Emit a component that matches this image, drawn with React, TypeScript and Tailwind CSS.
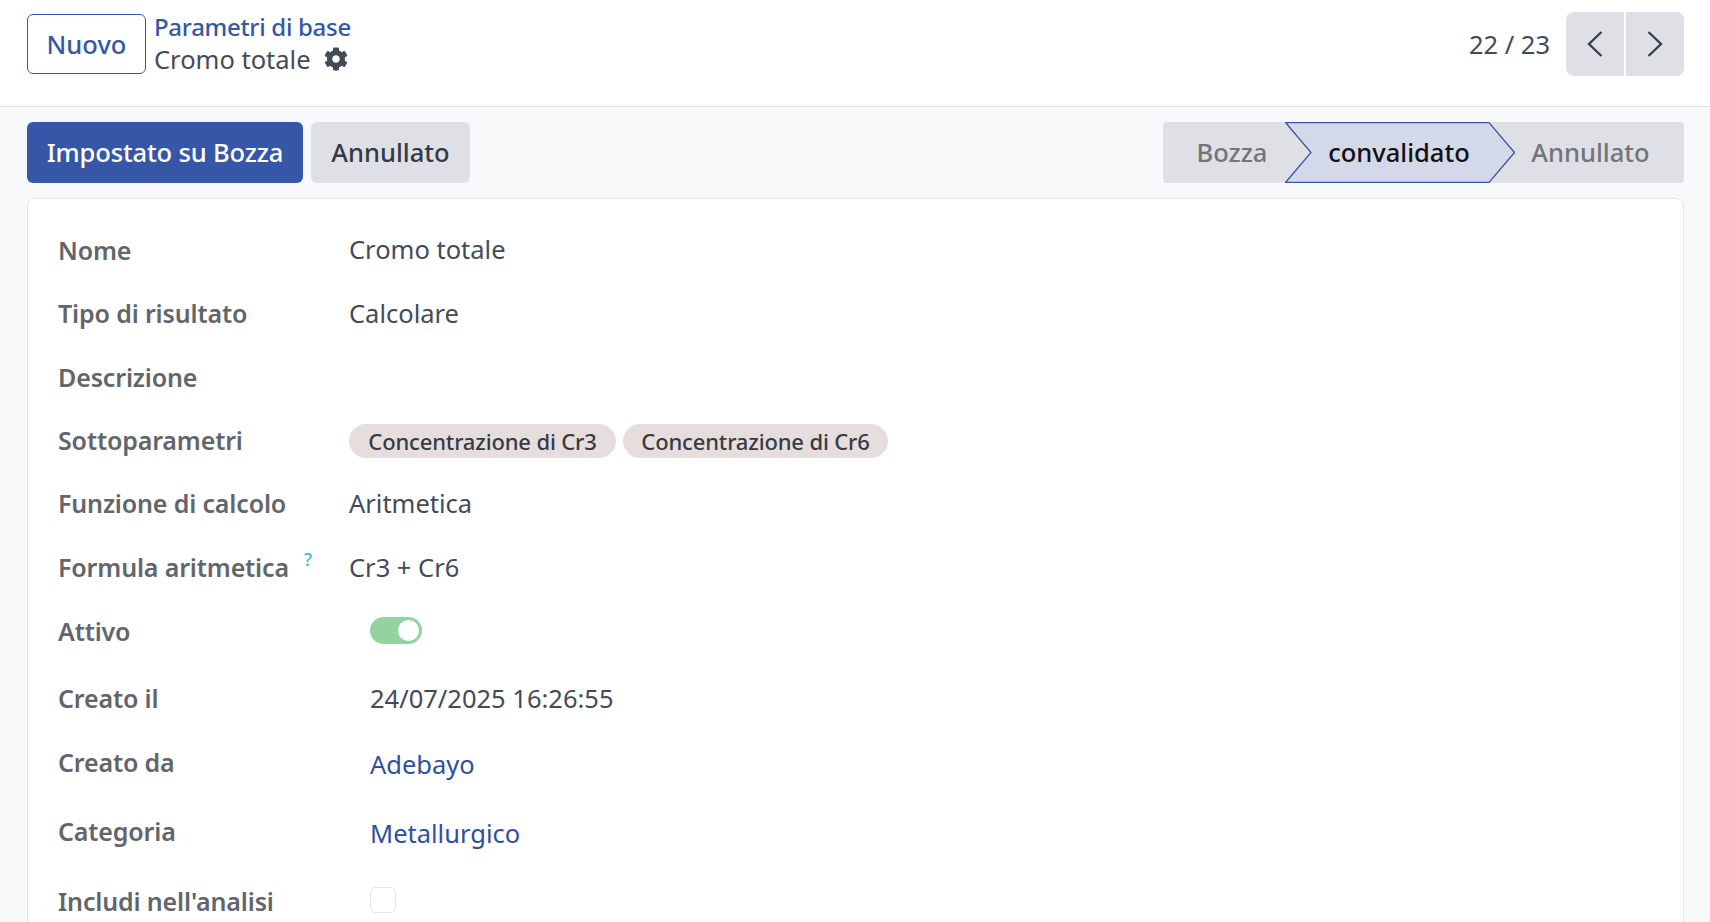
import React from "react";
import { FaCog } from "react-icons/fa";

const tag = "flex h-[34px] items-center justify-center rounded-full bg-[#e6dedc] text-[22px] font-medium tracking-[-0.15px] text-[#363b45]";

const rows: { label: string; h: string; help?: boolean; value: React.ReactNode }[] = [
  { label: "Nome", h: "h-[63px]", value: <span className="-mt-[2px]">Cromo totale</span> },
  { label: "Tipo di risultato", h: "h-[64px]", value: <span>Calcolare</span> },
  { label: "Descrizione", h: "h-[63px]", value: null },
  {
    label: "Sottoparametri",
    h: "h-[63px]",
    value: (
      <div className="flex items-center gap-[7px] pt-[2px]">
        <span className={`${tag} w-[267px]`}>Concentrazione di Cr3</span>
        <span className={`${tag} w-[265px]`}>Concentrazione di Cr6</span>
      </div>
    ),
  },
  { label: "Funzione di calcolo", h: "h-[64px]", value: <span>Aritmetica</span> },
  { label: "Formula aritmetica", h: "h-[64px]", help: true, value: <span>Cr3 + Cr6</span> },
  {
    label: "Attivo",
    h: "h-[67px]",
    value: (
      <div className="mb-[2px] ml-[21px] flex h-[27px] w-[52px] items-center justify-end rounded-full bg-[#92d3a0] pr-[3px]">
        <div className="h-[21px] w-[21px] rounded-full bg-white" />
      </div>
    ),
  },
  { label: "Creato il", h: "h-[64px]", value: <span className="pl-[21px]">24/07/2025 16:26:55</span> },
  {
    label: "Creato da",
    h: "h-[69px]",
    value: <span className="block pl-[21px] pt-[4px] text-[#2f4f9f]">Adebayo</span>,
  },
  {
    label: "Categoria",
    h: "h-[70px]",
    value: <span className="block pl-[21px] pt-[4px] text-[#2f4f9f]">Metallurgico</span>,
  },
  {
    label: "Includi nell'analisi",
    h: "h-[63px]",
    value: <div className="mb-[2px] ml-[21px] h-[26px] w-[26px] rounded-[5px] border border-[#e5e7eb] bg-white" />,
  },
];

function Chevron({ dir }: { dir: "l" | "r" }) {
  return (
    <svg width="16" height="26" viewBox="0 0 16 26" fill="none" stroke="#374151" strokeWidth="2.4">
      <path d={dir === "l" ? "M14.5 1 L2 13 L14.5 25" : "M1.5 1 L14 13 L1.5 25"} />
    </svg>
  );
}

export default function App() {
  return (
    <div
      className="flex h-[922px] w-[1710px] flex-col overflow-hidden bg-[#f8f9fb] text-[25.5px] text-[#434b58]"
      style={{ fontFamily: '"Noto Sans", sans-serif' }}
    >
      <header className="flex h-[107px] shrink-0 items-start justify-between border-b border-[#dee0e5] bg-white pl-[27px] pr-[26px]">
        <div className="flex items-start gap-[8px] pt-[14px]">
          <button className="flex h-[60px] w-[119px] items-center justify-center rounded-[6px] border border-[#3657a7] bg-white font-medium text-[#3657a7]">
            Nuovo
          </button>
          <div className="-mt-[1px] flex flex-col">
            <span className="-mt-[2px] h-[32px] text-[24px] font-medium leading-[32px] tracking-[-0.3px] text-[#3657a7]">
              Parametri di base
            </span>
            <div className="flex h-[32px] items-center gap-[13px]">
              <span>Cromo totale</span>
              <FaCog className="h-[24px] w-[24px] text-[#434b58]" />
            </div>
          </div>
        </div>
        <div className="flex items-center gap-[16px] pt-[12px]">
          <span>22 / 23</span>
          <div className="flex h-[64px] gap-[2px]">
            <button className="flex w-[58px] items-center justify-center rounded-l-[8px] bg-[#dee0e5]">
              <Chevron dir="l" />
            </button>
            <button className="flex w-[58px] items-center justify-center rounded-r-[8px] bg-[#dee0e5]">
              <Chevron dir="r" />
            </button>
          </div>
        </div>
      </header>

      <div className="mt-[15px] flex h-[61px] shrink-0 items-stretch justify-between pl-[27px] pr-[26px]">
        <div className="flex gap-[8px]">
          <button className="w-[276px] rounded-[6px] bg-[#3657a7] font-medium tracking-[-0.15px] text-white">Impostato su Bozza</button>
          <button className="w-[159px] rounded-[6px] bg-[#dee0e5] font-medium text-[#343a45]">Annullato</button>
        </div>
        <div className="flex w-[521px] rounded-[4px] bg-[#dee0e5] font-medium text-[#72757a]">
          <div className="flex w-[122px] items-center justify-center pl-[16px]">Bozza</div>
          <div className="relative flex w-[230px] items-center justify-center pr-[2px] text-[#111]">
            <svg className="absolute inset-0 h-full w-full" viewBox="0 0 230 61" preserveAspectRatio="none">
              <path d="M0.7 0.7 H204 L229.5 30.5 L204 60.3 H0.7 L26 30.5 Z" fill="#d3d9e9" stroke="#3657a7" strokeWidth="1.3" />
            </svg>
            <span className="relative">convalidato</span>
          </div>
          <div className="flex flex-1 items-center justify-center pr-[18px]">Annullato</div>
        </div>
      </div>

      <main className="ml-[27px] mr-[26px] mt-[15px] flex-1 rounded-t-[8px] border border-[#e3e6ea] bg-white pl-[30px] pt-[33px]">
        {rows.map((r) => (
          <div key={r.label} className={`flex items-start ${r.h}`}>
            <div className="flex h-[36px] w-[291px] shrink-0 items-center pt-[2px] text-[25px] font-semibold tracking-[-0.15px] text-[#62666b]">
              {r.label}
              {r.help && <span className="relative -top-[9px] ml-[15px] text-[18px] font-medium text-[#45bcd0]">?</span>}
            </div>
            <div className="flex h-[36px] flex-1 items-center">{r.value}</div>
          </div>
        ))}
      </main>
    </div>
  );
}
